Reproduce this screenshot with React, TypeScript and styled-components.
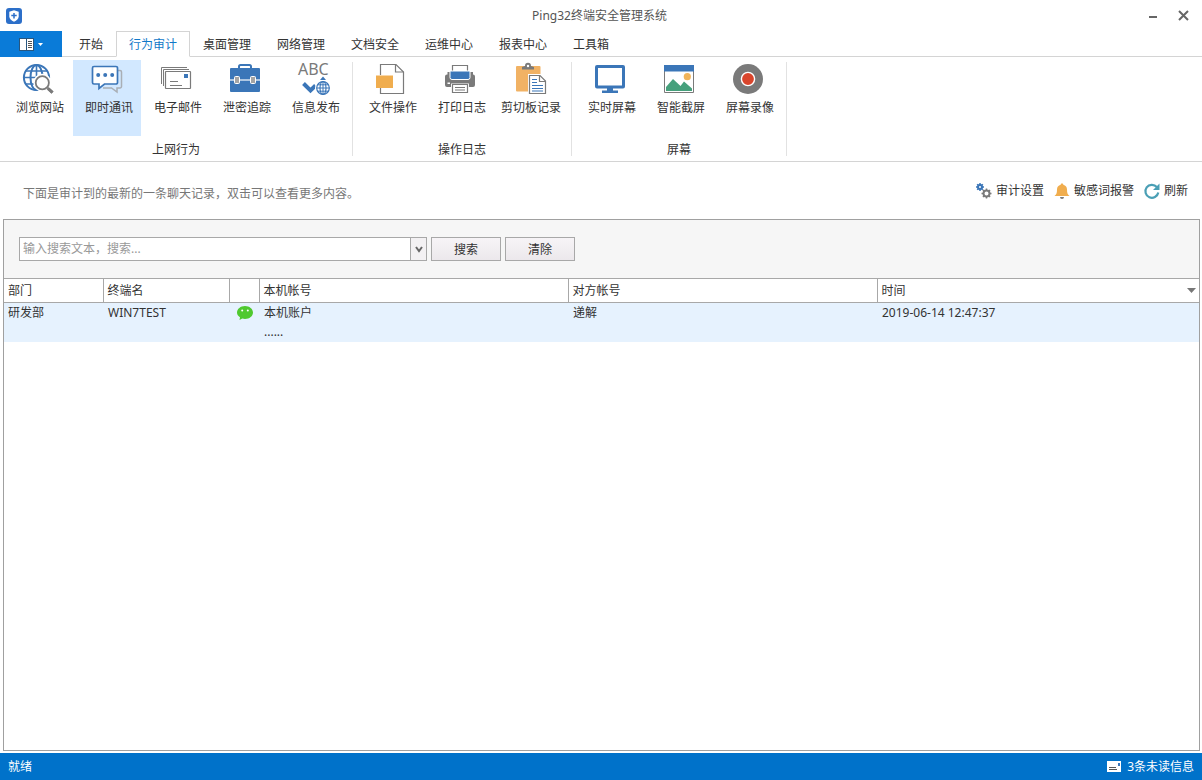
import React from "react";
import styled, { createGlobalStyle, css } from "styled-components";

const BLUE = "#3b76b8";
const GRAY = "#7a7a7a";

const GlobalStyle = createGlobalStyle`
  * { box-sizing: border-box; }
  body { margin: 0; background: #fff; }
  body, button, input, table {
    font-family: "Noto Sans", "Noto Sans CJK SC", sans-serif;
    font-size: 12px;
    line-height: 16px;
    color: #333;
  }
  button { border: 0; padding: 0; background: none; cursor: pointer; }
  svg { display: block; flex: none; overflow: visible; }
`;

const Window = styled.div`
  display: flex;
  flex-direction: column;
  min-height: 100vh;
`;

const TitleBar = styled.header`
  display: grid;
  grid-template-columns: 1fr auto 1fr;
  align-items: center;
  height: 31px;
  padding: 0 11px 0 6px;
`;

const Title = styled.h1`
  margin: 0;
  padding-left: 2px;
  font-size: 12px;
  font-weight: 400;
  color: #555;
`;

const WindowButtons = styled.div`
  display: flex;
  justify-content: flex-end;
  gap: 15px;
`;

const TabBar = styled.nav`
  display: flex;
  height: 26px;
  border-bottom: 1px solid #d4d4d4;
`;

const FileButton = styled.button`
  display: flex;
  align-items: center;
  justify-content: center;
  gap: 4px;
  width: 62px;
  height: 26px;
  margin-right: 4px;
  background: #0a7bd8;
`;

const Tab = styled.button<{ $active?: boolean }>`
  height: 26px;
  padding: 2px 12px 0;
  border: 1px solid transparent;
  ${(p) =>
    p.$active &&
    css`
      color: #1078c8;
      background: #fff;
      border-color: #d4d4d4;
      border-bottom-color: #fff;
    `}
`;

const Ribbon = styled.section`
  display: flex;
  height: 105px;
  padding-top: 3px;
  border-bottom: 1px solid #d4d4d4;
`;

const RibbonGroup = styled.div`
  display: flex;
  flex-direction: column;
  align-items: center;
  justify-content: space-between;
  height: 98px;
  padding: 0 4px;
`;

const Divider = styled.div`
  width: 1px;
  height: 94px;
  margin-top: 2px;
  background: #e2e2e2;
`;

const RibbonItems = styled.div`
  display: flex;
  gap: 1px;
`;

const RibbonButton = styled.button<{ $active?: boolean; $wide?: boolean }>`
  display: flex;
  flex-direction: column;
  align-items: center;
  gap: 5px;
  width: ${(p) => (p.$wide ? 72 : 68)}px;
  height: 76px;
  padding-top: 3px;
  background: ${(p) => (p.$active ? "#d2e8ff" : "transparent")};
  white-space: nowrap;

  span { padding-left: ${(p) => (p.$wide ? 0 : 4)}px; }
`;

const GroupLabel = styled.div`
  height: 16px;
`;

const InfoBar = styled.section`
  display: flex;
  align-items: center;
  justify-content: space-between;
  height: 57px;
  padding: 0 14px 0 23px;
`;

const Hint = styled.p`
  margin: 6px 0 0;
  color: #777;
`;

const Actions = styled.div`
  display: flex;
  gap: 10px;
`;

const Action = styled.button`
  display: flex;
  align-items: center;
  gap: 4px;
`;

const Panel = styled.main`
  flex: 1;
  margin: 0 2px 2px 3px;
  border: 1px solid #a0a0a0;
`;

const SearchBar = styled.form`
  display: flex;
  gap: 4px;
  padding: 17px 15px;
  background: #f6f6f6;
`;

const ComboBox = styled.div`
  display: flex;
  width: 408px;
  height: 24px;
  border: 1px solid #a8a8a8;
  background: #fff;
`;

const SearchInput = styled.input`
  flex: 1;
  min-width: 0;
  padding: 0 3px;
  border: 0;
  outline: 0;
  background: transparent;
  &::placeholder { color: #999; opacity: 1; }
`;

const DropButton = styled.button`
  display: flex;
  align-items: center;
  justify-content: center;
  width: 16px;
  border-left: 1px solid #a8a8a8;
  background: #f3f1f3;
`;

const PushButton = styled.button`
  width: 70px;
  height: 24px;
  padding-top: 2px;
  border: 1px solid #a8a8a8;
  background: linear-gradient(#f7f4f7, #ece8ec);
`;

const Records = styled.table`
  width: 100%;
  table-layout: fixed;
  border-collapse: collapse;
`;

const HeadCell = styled.th`
  height: 24px;
  padding: 0 4px;
  border: 1px solid #a8a8a8;
  font-weight: 400;
  text-align: left;
  &:first-child { border-left: 0; }
  &:last-child { border-right: 0; padding-right: 3px; }
`;

const HeadContent = styled.div`
  display: flex;
  align-items: center;
  justify-content: space-between;
`;

const Row = styled.tr`
  height: 39px;
  background: #e6f2fe;
`;

const Cell = styled.td`
  padding: 2px 4px 0 5px;
  vertical-align: top;
  &:first-child { padding-left: 4px; }
`;

const IconCell = styled(Cell)`
  padding: 2px 6px 0 8px;
`;

const More = styled.div`
  padding-top: 3px;
`;

const StatusBar = styled.footer`
  display: flex;
  align-items: center;
  justify-content: space-between;
  height: 27px;
  padding: 0 8px;
  background: #0072ca;
  color: #fff;
`;

const Unread = styled.button`
  display: flex;
  align-items: center;
  gap: 5px;
  color: #fff;
`;

const Icon32 = ({ children }: { children: React.ReactNode }) => (
  <svg width="32" height="32" viewBox="0 0 32 32" fill="none" aria-hidden="true">
    {children}
  </svg>
);

const Icon16 = ({ children }: { children: React.ReactNode }) => (
  <svg width="16" height="16" viewBox="0 0 16 16" fill="none" aria-hidden="true">
    {children}
  </svg>
);

const BrowseIcon = () => (
  <Icon32>
    <g stroke={BLUE} strokeWidth="2">
      <circle cx="14.5" cy="14.5" r="12.6" />
      <ellipse cx="14.5" cy="14.5" rx="6" ry="12.6" />
      <path d="M14.500 2v25M2 14.500h25M4 8h21M4 21h21" strokeWidth="1.600" />
    </g>
    <path d="M25 24.500l5.500 5" stroke={GRAY} strokeWidth="3" />
    <circle cx="20.300" cy="19.700" r="7" fill="#fff" stroke="#fff" strokeWidth="4" />
    <circle cx="20.300" cy="19.700" r="6.600" fill="#fff" stroke={GRAY} strokeWidth="1.800" />
    <path d="M25.500 25l5 4.700" stroke={GRAY} strokeWidth="3" />
  </Icon32>
);

const ChatIcon = () => (
  <Icon32>
    <path d="M26 7.500h3a1.500 1.500 0 0 1 1.500 1.500v14.500a1.500 1.500 0 0 1-1.500 1.500h-3v4l-5.500-4H12" stroke="#a9aeb5" strokeWidth="1.500" />
    <path d="M3 3.500h22a1.500 1.500 0 0 1 1.500 1.500v14.500a1.500 1.500 0 0 1-1.500 1.500H13.500L8 25.500V21H3a1.500 1.500 0 0 1-1.500-1.500V5A1.500 1.500 0 0 1 3 3.500z" fill="#fff" stroke={BLUE} strokeWidth="1.700" />
    <g fill={BLUE}>
      <circle cx="7.200" cy="12" r="2" />
      <circle cx="14.200" cy="12" r="2" />
      <circle cx="21.200" cy="12" r="2" />
    </g>
  </Icon32>
);

const MailIcon = () => (
  <Icon32>
    <path d="M27 4.500H1.500v16.500M29 6.500H3.500V23" stroke={GRAY} />
    <rect x="5.500" y="8.500" width="25" height="17" rx="0.500" stroke={GRAY} strokeWidth="1.200" />
    <path d="M24 11h4v4h-4z" fill={BLUE} />
    <path d="M10 18.500h8M10 22.500h12" stroke={GRAY} strokeWidth="1.200" />
  </Icon32>
);

const BriefcaseIcon = () => (
  <Icon32>
    <path d="M10 6V3.500A1.500 1.500 0 0 1 11.500 2h9A1.500 1.500 0 0 1 22 3.500V6" stroke={BLUE} strokeWidth="2" />
    <rect x="1" y="5" width="30" height="24" rx="1" fill={BLUE} />
    <path d="M1 17h30" stroke="#fff" strokeWidth="1.200" />
    <g fill="#a5a5a5" stroke="#fff">
      <rect x="5.500" y="13.500" width="5" height="7" rx="1" />
      <rect x="21.500" y="13.500" width="5" height="7" rx="1" />
    </g>
  </Icon32>
);

const PublishIcon = () => (
  <Icon32>
    <text x="0" y="12" fontSize="16" fill={GRAY}>ABC</text>
    <path d="M5.500 20.500l7 7 5-5" stroke={BLUE} strokeWidth="4" />
    <circle cx="25" cy="25" r="8" fill="#fff" />
    <path d="M22 17l3-3.500 3 3.500z" fill={BLUE} />
    <g stroke={BLUE} strokeWidth="1.200">
      <circle cx="25" cy="25" r="6.300" />
      <ellipse cx="25" cy="25" rx="3" ry="6.300" />
      <path d="M25 18.700v12.600M18.700 25h12.600M19.800 21.800h10.400M19.800 28.200h10.400" strokeWidth="1" />
    </g>
  </Icon32>
);

const FileIcon = () => (
  <Icon32>
    <path d="M5.500 12V1.500h15.500l7.500 7.500v21.500h-23V25" stroke={GRAY} strokeWidth="1.200" />
    <path d="M20.500 1.500V9h8" stroke={GRAY} strokeWidth="1.200" />
    <path d="M1 12.500h17V25H1z" fill="#f0ad4e" />
  </Icon32>
);

const PrinterIcon = () => (
  <Icon32>
    <path d="M8.500 10V2.500h15V10" fill="#fff" stroke={GRAY} strokeWidth="1.200" />
    <path d="M3.500 11.500V9H29v2.500a2 2 0 0 1 2 2V22a2 2 0 0 1-2 2H3a2 2 0 0 1-2-2v-8.500a2 2 0 0 1 2-2z" fill={GRAY} />
    <path d="M6 8h20v6.500a2 2 0 0 1-2 2H8a2 2 0 0 1-2-2z" fill={BLUE} stroke="#fff" />
    <path d="M3.500 19.500h2.500v1.500H3.500z" fill="#fff" />
    <path d="M7 20.500h18V24H7z" fill="#fff" />
    <path d="M8.500 21.500h15v8h-15z" fill="#fff" stroke={GRAY} strokeWidth="1.200" />
    <path d="M11 24.500h10M11 27h10" stroke={GRAY} />
  </Icon32>
);

const ClipboardIcon = () => (
  <Icon32>
    <rect x="1" y="3" width="24.500" height="25.500" rx="1" fill="#f1b264" />
    <path d="M7 6.500V4l3-1a3 3.200 0 0 1 6 0l3 1v2.500z" fill={GRAY} />
    <circle cx="13" cy="3" r="1.200" fill="#fff" />
    <path d="M14.500 12.500h10.500l5.500 5.500v12.500h-16z" fill="#fff" stroke="#fff" strokeWidth="3" />
    <path d="M14.500 12.500h10.500l5.500 5.500v12.500h-16z" fill="#fff" stroke={GRAY} strokeWidth="1.200" />
    <path d="M24.500 12.500v6h6" stroke={GRAY} strokeWidth="1.200" />
    <path d="M17 16.500h5M17 19.500h5M17 22.500h11M17 25.500h11M17 28h11" stroke={BLUE} strokeWidth="1.200" />
  </Icon32>
);

const MonitorIcon = () => (
  <Icon32>
    <rect x="2.500" y="3.500" width="27" height="20.500" rx="0.500" stroke={BLUE} strokeWidth="3" />
    <path d="M13 25h6v2.500h5V30H8v-2.500h5z" fill={BLUE} />
  </Icon32>
);

const ScreenshotIcon = () => (
  <Icon32>
    <path d="M1.500 2.500h29v27h-29z" stroke={GRAY} />
    <path d="M1 2h30v6.500H1z" fill={BLUE} />
    <circle cx="24.300" cy="13.700" r="3.600" fill="#f1b45a" />
    <path d="M3 28v-4l7-8 7.500 7 3.500-4.500 8 7V28z" fill="#46a07c" />
  </Icon32>
);

const RecordIcon = () => (
  <Icon32>
    <circle cx="16" cy="16" r="15" fill={GRAY} />
    <circle cx="16" cy="16" r="6.600" fill="#d9452c" stroke="#fff" strokeWidth="1.400" />
  </Icon32>
);

const gearTeeth = [0, 45, 90, 135, 180, 225, 270, 315];

const Gear = ({ x, y, r, color }: { x: number; y: number; r: number; color: string }) => (
  <g transform={`translate(${x} ${y})`} stroke={color}>
    <circle r={r} strokeWidth="2" />
    {gearTeeth.map((a) => (
      <path key={a} d={`M0 ${-r}v-2`} transform={`rotate(${a})`} strokeWidth="1.500" />
    ))}
  </g>
);

const SettingsIcon = () => (
  <Icon16>
    <Gear x={4} y={4} r={2} color={BLUE} />
    <Gear x={10.5} y={10.5} r={3} color={GRAY} />
  </Icon16>
);

const BellIcon = () => (
  <Icon16>
    <path d="M8 0.500c.8 0 1.300.5 1.300 1.300C11.800 2.500 13 4 13 6.500c0 3.500.5 4.800 2.500 6.500H.5C2.500 11.300 3 10 3 6.500c0-2.500 1.200-4 3.700-4.700C6.700 1 7.200.500 8 .500z" fill="#f0ad4e" />
    <path d="M6 14h4a2 2 0 0 1-4 0z" fill={GRAY} />
  </Icon16>
);

const RefreshIcon = () => (
  <Icon16>
    <path d="M12.800 4A6.500 6.500 0 1 0 14.300 9.500" stroke="#4a9fb5" strokeWidth="2.200" />
    <path d="M15.500 0.500V7H9z" fill="#4a9fb5" />
  </Icon16>
);

const LogoIcon = () => (
  <Icon16>
    <rect width="16" height="16" rx="3" fill="#2c6fc9" />
    <path d="M8 2.300l4.700 1.400v4.600c0 2.500-2 4.200-4.700 5.400-2.700-1.200-4.700-2.900-4.700-5.400V3.700z" fill="#fff" />
    <path d="M8 5v5.500M5.300 7.500h5.400" stroke="#2c6fc9" strokeWidth="1.500" />
  </Icon16>
);

const WeChatIcon = () => (
  <Icon16>
    <path d="M8 1c4.400 0 8 2.900 8 6.500S12.400 14 8 14c-1 0-1.900-.1-2.700-.4L2.500 15l.5-2.700C1.200 11.200 0 9.500 0 7.500 0 3.900 3.600 1 8 1z" fill="#4fc92f" />
    <circle cx="5.200" cy="5.500" r="1" fill="#fff" />
    <circle cx="10.800" cy="5.500" r="1" fill="#fff" />
  </Icon16>
);

const MenuPanelIcon = () => (
  <svg width="15" height="13" viewBox="0 0 15 13" aria-hidden="true">
    <path d="M0 0h15v13H0z" fill="#27567f" />
    <path d="M1 1h6v11H1zM8 1h6v11H8z" fill="#fff" />
    <path d="M9 3.500h4M9 5.500h4M9 7.500h4M9 9.500h4" stroke="#555" />
  </svg>
);

const Triangle = ({ width, height, color }: { width: number; height: number; color: string }) => (
  <svg width={width} height={height} viewBox="0 0 10 5" preserveAspectRatio="none" aria-hidden="true">
    <path d="M0 0h10L5 5z" fill={color} />
  </svg>
);

const StatusMailIcon = () => (
  <Icon16>
    <path d="M1 2h14v11H1z" fill="#fff" />
    <path d="M12 4h2v3h-2z" fill={BLUE} />
    <path d="M3 8.500h7M3 10.500h8" stroke="#555" />
  </Icon16>
);

const tabs = ["开始", "行为审计", "桌面管理", "网络管理", "文档安全", "运维中心", "报表中心", "工具箱"];

type Item = { label: string; Icon: React.FC; active?: boolean; wide?: boolean };

const groups: { label: string; items: Item[] }[] = [
  {
    label: "上网行为",
    items: [
      { label: "浏览网站", Icon: BrowseIcon },
      { label: "即时通讯", Icon: ChatIcon, active: true },
      { label: "电子邮件", Icon: MailIcon },
      { label: "泄密追踪", Icon: BriefcaseIcon },
      { label: "信息发布", Icon: PublishIcon },
    ],
  },
  {
    label: "操作日志",
    items: [
      { label: "文件操作", Icon: FileIcon },
      { label: "打印日志", Icon: PrinterIcon },
      { label: "剪切板记录", Icon: ClipboardIcon, wide: true },
    ],
  },
  {
    label: "屏幕",
    items: [
      { label: "实时屏幕", Icon: MonitorIcon },
      { label: "智能截屏", Icon: ScreenshotIcon },
      { label: "屏幕录像", Icon: RecordIcon },
    ],
  },
];

const actions = [
  { label: "审计设置", Icon: SettingsIcon },
  { label: "敏感词报警", Icon: BellIcon },
  { label: "刷新", Icon: RefreshIcon },
];

export default function App() {
  return (
    <Window>
      <GlobalStyle />
      <TitleBar>
        <LogoIcon />
        <Title>Ping32终端安全管理系统</Title>
        <WindowButtons>
          <button aria-label="最小化">
            <Icon16>
              <path d="M5 9h8" stroke="#666" strokeWidth="2" />
            </Icon16>
          </button>
          <button aria-label="关闭">
            <Icon16>
              <path d="M4 3l9 9M13 3l-9 9" stroke="#666" strokeWidth="2" />
            </Icon16>
          </button>
        </WindowButtons>
      </TitleBar>

      <TabBar>
        <FileButton aria-label="菜单">
          <MenuPanelIcon />
          <Triangle width={5} height={3} color="#fff" />
        </FileButton>
        {tabs.map((t) => (
          <Tab key={t} $active={t === "行为审计"}>{t}</Tab>
        ))}
      </TabBar>

      <Ribbon>
        {groups.map((g) => (
          <React.Fragment key={g.label}>
            <RibbonGroup>
              <RibbonItems>
                {g.items.map(({ label, Icon, active, wide }) => (
                  <RibbonButton key={label} $active={active} $wide={wide}>
                    <Icon />
                    <span>{label}</span>
                  </RibbonButton>
                ))}
              </RibbonItems>
              <GroupLabel>{g.label}</GroupLabel>
            </RibbonGroup>
            <Divider />
          </React.Fragment>
        ))}
      </Ribbon>

      <InfoBar>
        <Hint>下面是审计到的最新的一条聊天记录，双击可以查看更多内容。</Hint>
        <Actions>
          {actions.map(({ label, Icon }) => (
            <Action key={label}>
              <Icon />
              {label}
            </Action>
          ))}
        </Actions>
      </InfoBar>

      <Panel>
        <SearchBar onSubmit={(e) => e.preventDefault()}>
          <ComboBox>
            <SearchInput aria-label="搜索文本" placeholder="输入搜索文本，搜索..." />
            <DropButton type="button" aria-label="展开">
              <svg width="8" height="8" viewBox="0 0 8 8" fill="none" aria-hidden="true">
                <path d="M1 2l3 4 3-4" stroke="#666" strokeWidth="2" />
              </svg>
            </DropButton>
          </ComboBox>
          <PushButton type="submit">搜索</PushButton>
          <PushButton type="reset">清除</PushButton>
        </SearchBar>
        <Records>
          <colgroup>
            <col width="99" />
            <col width="126" />
            <col width="30" />
            <col width="309" />
            <col width="309" />
            <col />
          </colgroup>
          <thead>
            <tr>
              <HeadCell>部门</HeadCell>
              <HeadCell>终端名</HeadCell>
              <HeadCell aria-label="类型" />
              <HeadCell>本机帐号</HeadCell>
              <HeadCell>对方帐号</HeadCell>
              <HeadCell>
                <HeadContent>
                  时间
                  <Triangle width={9} height={5} color="#777" />
                </HeadContent>
              </HeadCell>
            </tr>
          </thead>
          <tbody>
            <Row>
              <Cell>研发部</Cell>
              <Cell>WIN7TEST</Cell>
              <IconCell><WeChatIcon /></IconCell>
              <Cell>
                本机账户
                <More>......</More>
              </Cell>
              <Cell>递解</Cell>
              <Cell>2019-06-14 12:47:37</Cell>
            </Row>
          </tbody>
        </Records>
      </Panel>

      <StatusBar>
        <span>就绪</span>
        <Unread>
          <StatusMailIcon />
          3条未读信息
        </Unread>
      </StatusBar>
    </Window>
  );
}
